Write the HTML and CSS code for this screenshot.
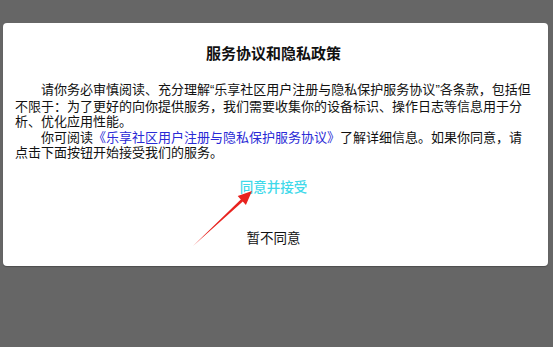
FILE: index.html
```html
<!DOCTYPE html>
<html lang="zh-CN">
<head>
<meta charset="utf-8">
<title>服务协议和隐私政策</title>
<link rel="stylesheet" href="styles.css">
</head>
<body>
<div class="dialog">
  <h1 class="title">服务协议和隐私政策</h1>
  <div class="body">
    <p class="para">请你务必审慎阅读、充分理解<span class="q">“</span>乐享社区用户注册与隐私保护服务协议<span class="q">”</span>各条款，包括但不限于：为了更好的向你提供服务，我们需要收集你的设备标识、操作日志等信息用于分析、优化应用性能。</p>
    <p class="para">你可阅读<a class="link">《乐享社区用户注册与隐私保护服务协议》</a>了解详细信息。如果你同意，请点击下面按钮开始接受我们的服务。</p>
  </div>
  <div class="actions">
    <span class="btn btn-agree">同意并接受</span>
    <span class="btn btn-decline">暂不同意</span>
  </div>
</div>
<svg class="arrow" width="70" height="65" viewBox="185 185 70 65" xmlns="http://www.w3.org/2000/svg">
  <polygon points="193,246 240.8,199.4 237.7,196.1 252,191 245.9,204.9 242.8,201.6" fill="#e8231f"/>
</svg>
</body>
</html>
```

FILE: styles.css
```css
html, body {
  margin: 0;
  padding: 0;
}
body {
  background: #666666;
  width: 553px;
  height: 347px;
  box-sizing: border-box;
  padding: 23px 5px 0 3px;
  font-family: "Noto Sans CJK SC", sans-serif;
  position: relative;
  overflow: hidden;
}
.dialog {
  background: #ffffff;
  border-radius: 4px;
  box-shadow: 0 1px 1px rgba(0, 0, 0, 0.25);
  height: 243px;
  box-sizing: border-box;
  padding: 20px 16px 20px 12px;
  display: flex;
  flex-direction: column;
}
.title {
  margin: 0;
  font-size: 15px;
  line-height: 20px;
  font-weight: bold;
  color: #111111;
  text-align: center;
}
.body {
  margin-top: 18px;
}
.para {
  margin: 0;
  font-size: 13px;
  line-height: 15.6px;
  color: #111111;
  text-indent: 26px;
}
.q {
  font-family: "Liberation Sans", sans-serif;
}
.link {
  color: #2a2ad6;
}
.actions {
  margin-top: 16px;
  display: flex;
  flex-direction: column;
  align-items: center;
  gap: 31px;
}
.btn {
  font-size: 13.5px;
  line-height: 20px;
}
.btn-agree {
  color: #3fd9ea;
  font-weight: 500;
}
.btn-decline {
  color: #111111;
}
.arrow {
  position: absolute;
  left: 185px;
  top: 185px;
}
```
